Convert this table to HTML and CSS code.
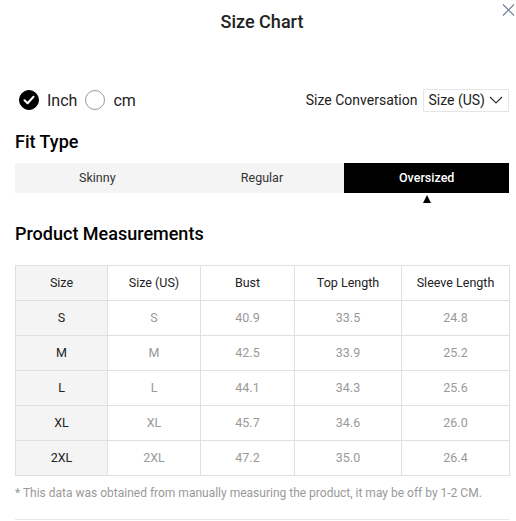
FILE: index.html
```html
<!DOCTYPE html>
<html>
<head>
<meta charset="utf-8">
<link rel="stylesheet" href="styles.css">
</head>
<body>
<div class="modal">
  <button class="close" aria-label="Close">
    <svg width="13" height="12" viewBox="0 0 13 12"><path d="M1 0.5 L12 11.5 M12 0.5 L1 11.5" stroke="#6b7a99" stroke-width="1.1" fill="none"/></svg>
  </button>
  <h1 class="title">Size Chart</h1>

  <div class="units-row">
    <div class="units">
      <label class="unit">
        <span class="radio checked">
          <svg width="12" height="10" viewBox="0 0 12 10"><path d="M1.5 5.2 L4.6 8.2 L10.5 1.8" stroke="#fff" stroke-width="2" fill="none" stroke-linecap="round" stroke-linejoin="round"/></svg>
        </span>
        <span class="unit-label">Inch</span>
      </label>
      <label class="unit">
        <span class="radio"></span>
        <span class="unit-label">cm</span>
      </label>
    </div>
    <div class="conversion">
      <span class="conv-label">Size Conversation</span>
      <div class="select">
        <span>Size (US)</span>
        <svg width="14" height="8" viewBox="0 0 14 8"><path d="M1 1 L7 7 L13 1" stroke="#333" stroke-width="1.2" fill="none"/></svg>
      </div>
    </div>
  </div>

  <h2 class="section-title">Fit Type</h2>
  <div class="tabs">
    <div class="tab">Skinny</div>
    <div class="tab">Regular</div>
    <div class="tab active">Oversized</div>
  </div>

  <h2 class="section-title measurements">Product Measurements</h2>
  <table class="chart">
    <colgroup>
      <col class="c1"><col class="c2"><col class="c3"><col class="c4"><col class="c5">
    </colgroup>
    <thead>
      <tr><th class="first">Size</th><th>Size (US)</th><th>Bust</th><th>Top Length</th><th>Sleeve Length</th></tr>
    </thead>
    <tbody>
      <tr><td class="first">S</td><td>S</td><td>40.9</td><td>33.5</td><td>24.8</td></tr>
      <tr><td class="first">M</td><td>M</td><td>42.5</td><td>33.9</td><td>25.2</td></tr>
      <tr><td class="first">L</td><td>L</td><td>44.1</td><td>34.3</td><td>25.6</td></tr>
      <tr><td class="first">XL</td><td>XL</td><td>45.7</td><td>34.6</td><td>26.0</td></tr>
      <tr><td class="first">2XL</td><td>2XL</td><td>47.2</td><td>35.0</td><td>26.4</td></tr>
    </tbody>
  </table>
  <p class="note">* This data was obtained from manually measuring the product, it may be off by 1-2 CM.</p>
  <div class="divider"></div>
</div>
</body>
</html>
```

FILE: styles.css
```css
* { box-sizing: border-box; }
html, body { margin: 0; padding: 0; background: #fff; }
body { font-family: Roboto, "Noto Sans", Arial, sans-serif; color: #222; }

.modal {
  position: relative;
  width: 516px;
  padding: 0 7px 0 15px;
}

.close {
  position: absolute;
  top: 4px;
  right: 1px;
  border: 0;
  background: none;
  padding: 0;
  width: 13px;
  height: 12px;
  line-height: 0;
}

.title {
  margin: 0;
  padding-top: 10px;
  height: 88px;
  text-align: center;
  font-size: 18px;
  font-weight: 500;
  line-height: 24px;
  color: #222;
}

.units-row {
  display: flex;
  align-items: center;
  justify-content: space-between;
  height: 24px;
}
.units { display: flex; align-items: center; padding-left: 4px; gap: 8px; }
.unit { display: flex; align-items: center; gap: 8px; }
.radio {
  width: 20px;
  height: 20px;
  border-radius: 50%;
  border: 1px solid #999;
  display: flex;
  align-items: center;
  justify-content: center;
}
.radio.checked { background: #000; border-color: #000; }
.unit-label { font-size: 16px; color: #222; }

.conversion { display: flex; align-items: center; gap: 6px; }
.conv-label { font-size: 14px; color: #222; }
.select {
  display: flex;
  align-items: center;
  gap: 4px;
  height: 23px;
  padding: 0 5px 0 4px;
  border: 1px solid #e5e5e5;
  font-size: 14px;
  color: #222;
}

.section-title {
  margin: 0;
  font-size: 18px;
  font-weight: 500;
  line-height: 24px;
  color: #000;
}
.units-row + .section-title { margin-top: 18px; }

.tabs {
  display: flex;
  margin-top: 9px;
  height: 30px;
  background: #f4f4f4;
}
.tab {
  flex: 1;
  display: flex;
  align-items: center;
  justify-content: center;
  padding-bottom: 2px;
  font-size: 12.5px;
  color: #333;
  position: relative;
}
.tab.active { background: #000; color: #fff; font-weight: 500; }
.tab.active::after {
  content: "";
  position: absolute;
  left: 50%;
  top: 32px;
  margin-left: -4px;
  border-left: 4px solid transparent;
  border-right: 4px solid transparent;
  border-bottom: 8px solid #000;
}

.section-title.measurements { margin-top: 29px; }

.chart {
  margin-top: 19px;
  width: 494px;
  border-collapse: collapse;
  table-layout: fixed;
  font-size: 12.5px;
}
.c1 { width: 92px; }
.c2 { width: 93px; }
.c3 { width: 94px; }
.c4 { width: 107px; }
.c5 { width: 108px; }
.chart th, .chart td {
  border: 1px solid #e0e0e0;
  height: 35px;
  padding: 0 0 2px;
  text-align: center;
  font-weight: 400;
}
.chart th { color: #222; }
.chart td { color: #999; }
.chart .first { background: #f4f4f4; color: #222; }

.note {
  margin: 9px 0 0;
  font-size: 12px;
  line-height: 16px;
  color: #999;
}
.divider {
  margin-top: 18px;
  height: 1px;
  background: #e8e8e8;
}
```
